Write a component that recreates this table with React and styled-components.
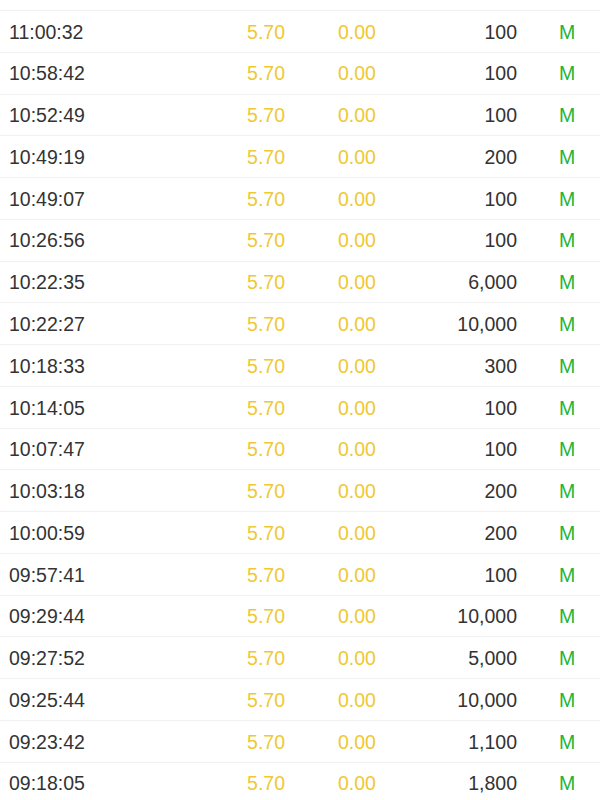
import React from "react";
import styled, { createGlobalStyle } from "styled-components";

const GlobalStyle = createGlobalStyle`
  html, body {
    margin: 0;
    padding: 0;
    background: #ffffff;
  }
  body {
    font-family: "Liberation Sans", Arial, sans-serif;
  }
`;

const trades = [
  ["11:00:32", "100"],
  ["10:58:42", "100"],
  ["10:52:49", "100"],
  ["10:49:19", "200"],
  ["10:49:07", "100"],
  ["10:26:56", "100"],
  ["10:22:35", "6,000"],
  ["10:22:27", "10,000"],
  ["10:18:33", "300"],
  ["10:14:05", "100"],
  ["10:07:47", "100"],
  ["10:03:18", "200"],
  ["10:00:59", "200"],
  ["09:57:41", "100"],
  ["09:29:44", "10,000"],
  ["09:27:52", "5,000"],
  ["09:25:44", "10,000"],
  ["09:23:42", "1,100"],
  ["09:18:05", "1,800"],
];

const TradeList = styled.div`
  padding-top: 10px;
  height: 800px;
  overflow: hidden;
  box-sizing: border-box;
`;

const TradeRow = styled.div`
  display: grid;
  grid-template-columns: 191px 85px 153px 79px 1fr;
  align-items: center;
  height: 41.78px;
  box-sizing: border-box;
  padding: 2px 0 0 9px;
  border-top: 1px solid #f1f1f1;
  font-size: 19.5px;
  line-height: 1;
`;

const Cell = styled.span`
  color: ${(p) => p.$color || "#333333"};
  text-align: ${(p) => (p.$right ? "right" : "left")};
  padding-left: ${(p) => p.$indent || 0}px;
  white-space: nowrap;
`;

const App = () => (
  <>
    <GlobalStyle />
    <TradeList>
      {trades.map(([time, vol]) => (
        <TradeRow key={time + vol}>
          <Cell>{time}</Cell>
          <Cell $right $color="#efc832">5.70</Cell>
          <Cell $indent={53} $color="#efc832">0.00</Cell>
          <Cell $right>{vol}</Cell>
          <Cell $indent={42} $color="#22b534">M</Cell>
        </TradeRow>
      ))}
    </TradeList>
  </>
);

export default App;
